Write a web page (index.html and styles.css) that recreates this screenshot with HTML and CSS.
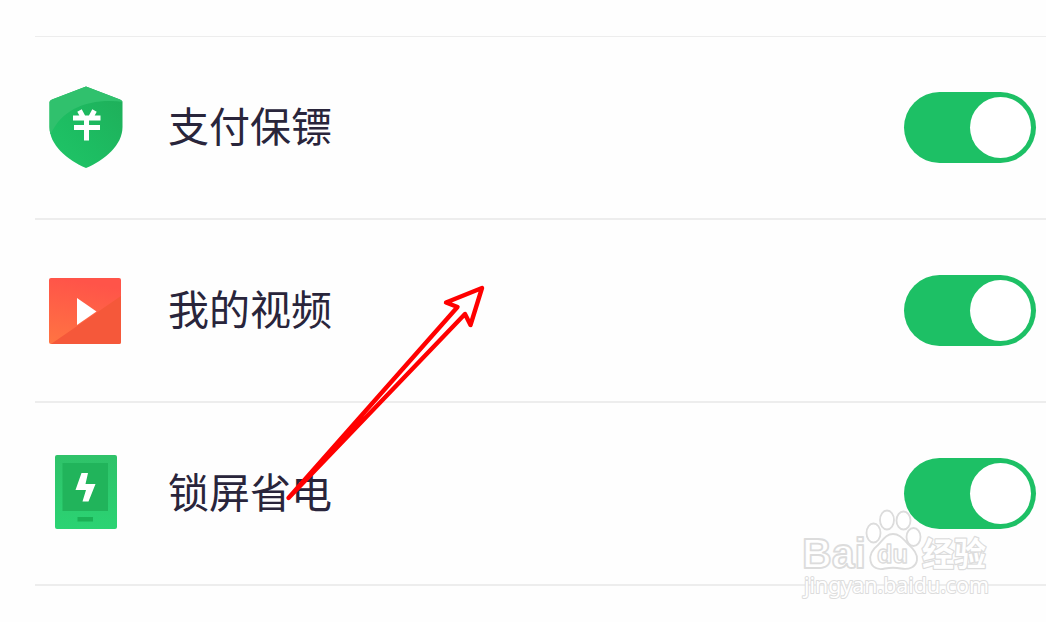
FILE: index.html
```html
<!DOCTYPE html>
<html lang="zh-CN">
<head>
  <meta charset="UTF-8">
  <meta name="viewport" content="width=device-width, initial-scale=1.0">
  <title>设置</title>
  <link rel="stylesheet" href="styles.css">
</head>
<body>

  <div class="settings-list">
    <label class="setting-row">
      <span class="setting-icon shield">
        <svg width="76" height="84" viewBox="0 0 76 84">
          <defs>
            <linearGradient id="shieldFill" x1="1" y1="0" x2="0" y2="1">
              <stop offset="0" stop-color="#1fad59"/>
              <stop offset="0.6" stop-color="#1dbd62"/>
              <stop offset="1" stop-color="#20c668"/>
            </linearGradient>
            <clipPath id="shieldClip">
              <path d="M38 1.500L72 14.500Q74.500 15.500 74.500 17V42C74.500 60 57 75 38 83C19 75 1.500 60 1.500 42V17Q1.500 15.500 4 14.500Z"/>
            </clipPath>
          </defs>
          <g clip-path="url(#shieldClip)">
            <rect width="76" height="84" fill="url(#shieldFill)"/>
            <path d="M0 0H76V17C44 13 15 22 3 49H0Z" fill="#30c16d"/>
          </g>
          <path d="M31.500 25.500L35 32M46.500 25.500L43 32M25 33H52.500M26 42.500H52M38.500 31V55.500" fill="none" stroke="#fff" stroke-width="5"/>
        </svg>
      </span>
      <span class="setting-name">支付保镖</span>
      <input type="checkbox" class="switch" checked>
    </label>

    <label class="setting-row">
      <span class="setting-icon video">
        <svg width="72" height="66" viewBox="0 0 72 66">
          <defs>
            <linearGradient id="videoFill" x1="0.2" y1="0" x2="0" y2="1">
              <stop offset="0" stop-color="#ff5449"/>
              <stop offset="1" stop-color="#ff7442"/>
            </linearGradient>
            <clipPath id="videoClip"><rect width="72" height="66" rx="2"/></clipPath>
          </defs>
          <g clip-path="url(#videoClip)">
            <rect width="72" height="66" fill="url(#videoFill)"/>
            <path d="M2 66L72 18V66Z" fill="#f5583a"/>
          </g>
          <path d="M28 20L47.500 33.500L28 47Z" fill="#fff"/>
        </svg>
      </span>
      <span class="setting-name">我的视频</span>
      <input type="checkbox" class="switch" checked>
    </label>

    <label class="setting-row">
      <span class="setting-icon phone">
        <svg width="62" height="74" viewBox="0 0 62 74">
          <defs>
            <linearGradient id="phoneFill" x1="0" y1="0" x2="0" y2="1">
              <stop offset="0" stop-color="#2fc269"/>
              <stop offset="1" stop-color="#2bd373"/>
            </linearGradient>
          </defs>
          <rect width="62" height="74" rx="2" fill="url(#phoneFill)"/>
          <rect x="7.500" y="8" width="45.500" height="48" fill="#21b45b"/>
          <rect x="22.500" y="62" width="15.500" height="4.500" fill="#1bb156"/>
          <path d="M26.500 18H33L30.500 29H40.500L33.500 46.500H27.500L31 35H20.500Z" fill="#fff"/>
        </svg>
      </span>
      <span class="setting-name">锁屏省电</span>
      <input type="checkbox" class="switch" checked>
    </label>
  </div>

  <!-- pointer arrow -->
  <svg class="arrow" width="210" height="226" viewBox="280 280 210 226">
    <path d="M288.500 498L457.500 307L446 302.500L482 288L470.500 325L465 314Z"/>
  </svg>

  <svg class="watermark" width="200" height="100" viewBox="795 503 200 100">
    <g class="watermark-shape">
      <text class="brand" x="802" y="568" textLength="64" lengthAdjust="spacingAndGlyphs">Bai</text>
      <ellipse cx="873.500" cy="533" rx="7" ry="9.500"/>
      <ellipse cx="887" cy="520" rx="7" ry="9.500"/>
      <ellipse cx="903.500" cy="520.500" rx="7" ry="9"/>
      <ellipse cx="913.500" cy="537" rx="7" ry="9"/>
      <path d="M893 534C886 534 883 540 878 545C873 549 869 554 870.500 561C872 568 878 570 885 568.500Q893 567 901 568.500C909 570 916 567 917 560C918 553 912 548 908 544C903 539 900 534 893 534Z"/>
      <text class="du" x="877" y="563" textLength="31" lengthAdjust="spacingAndGlyphs">du</text>
      <text class="cjk" x="922" y="566" textLength="64" lengthAdjust="spacingAndGlyphs">经验</text>
      <text class="site" x="804" y="593" textLength="185" lengthAdjust="spacingAndGlyphs">jingyan.baidu.com</text>
    </g>
  </svg>

</body>
</html>
```
FILE: styles.css
```css
:root {
  --green: #1dc065;
  --line: #ededed;
  --text: #29253b;
}

* {
  box-sizing: border-box;
  margin: 0;
  padding: 0;
}

body {
  font-family: 'Noto Sans CJK SC', 'Noto Sans', sans-serif;
  background: #fefefe;
  color: var(--text);
  min-height: 100vh;
  padding-top: 36px;
  overflow: hidden;
}

.settings-list {
  margin-left: 35px;
  border-top: 1px solid var(--line);
}

.setting-row {
  display: flex;
  align-items: center;
  height: 183px;
  padding: 0 10px 0 13px;
  border-bottom: 2px solid var(--line);
}

.setting-icon {
  display: flex;
  width: 76px;
  margin-right: 44px;
}

.setting-icon.shield {
  padding-bottom: 1px;
}

.setting-icon.video {
  padding-left: 1px;
}

.setting-icon.phone {
  padding: 0 0 3px 7px;
}

.setting-name {
  flex: 1;
  padding-bottom: 8px;
  font-size: 41px;
  line-height: 60px;
}

.switch {
  appearance: none;
  display: flex;
  justify-content: flex-end;
  width: 132px;
  height: 71px;
  padding: 5px;
  border-radius: 36px;
  background: var(--green);
}

.switch::before {
  content: '';
  width: 61px;
  height: 61px;
  border-radius: 50%;
  background: #fff;
}

.arrow {
  position: absolute;
  left: 280px;
  top: 280px;
}

.arrow path {
  fill: none;
  stroke: #ff0000;
  stroke-width: 4.4;
  stroke-linejoin: round;
}

.watermark {
  position: absolute;
  left: 795px;
  top: 503px;
}

.watermark-shape {
  fill: #fff;
  stroke: #dcdcdc;
  stroke-width: 1.8px;
  stroke-linejoin: round;
  font-family: 'Liberation Sans', sans-serif;
}

.brand {
  font-size: 42px;
  font-weight: 700;
}

.du {
  font-size: 25px;
  font-weight: 700;
  stroke-width: 1.4px;
}

.cjk {
  font-family: 'Noto Sans CJK SC', sans-serif;
  font-size: 33px;
  font-weight: 700;
  stroke-width: 2.5px;
  paint-order: stroke;
}

.site {
  font-family: 'Noto Sans', sans-serif;
  font-size: 22px;
  stroke-width: 2px;
  paint-order: stroke;
}
```
